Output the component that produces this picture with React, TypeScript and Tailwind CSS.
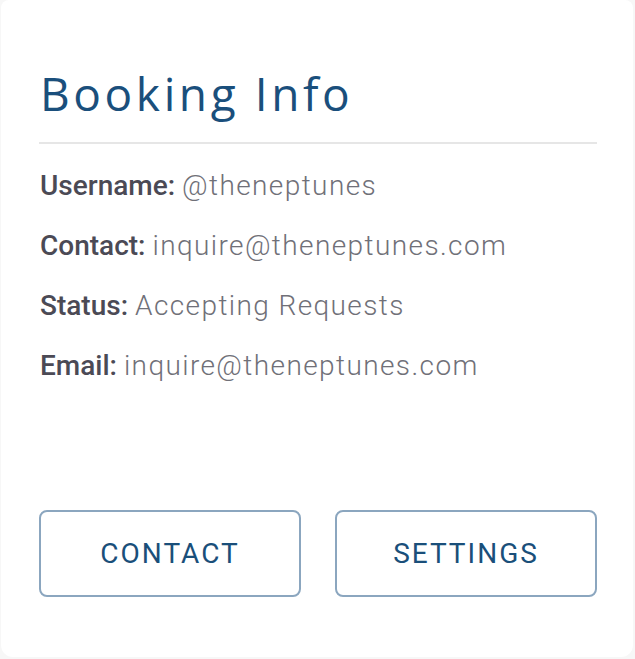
import React from 'react'

const rows = [
    { label: 'Username:', value: '@theneptunes' },
    { label: 'Contact:', value: 'inquire@theneptunes.com' },
    { label: 'Status:', value: 'Accepting Requests' },
    { label: 'Email:', value: 'inquire@theneptunes.com' },
]

const App = () => {
    return (
        <div className="min-h-[659px] w-full bg-[#f7f7f7] pl-px pr-[2px] pb-[2px]">
            <div className="flex h-[657px] flex-col rounded-b-xl rounded-t-lg bg-white pl-[38px] pr-[36px] pt-[65px]">
                <h2 className="pl-px font-['Open_Sans',sans-serif] text-[46px] leading-[56px] tracking-[3.6px] text-[#1a4f7c]">
                    Booking Info
                </h2>
                <div className="mt-[21px] h-[2px] bg-[#e6e6e6]" />
                <div className="mt-[25px] flex flex-col gap-[26px] pl-px font-['Roboto',sans-serif] text-[28px] leading-[34px]">
                    {rows.map((row) => (
                        <p key={row.label}>
                            <span className="font-medium text-[#4b4a55]">{row.label}</span>{' '}
                            <span className="font-light tracking-[1.4px] text-[#707078]">{row.value}</span>
                        </p>
                    ))}
                </div>
                <div className="mt-auto mb-[60px] grid grid-cols-2 gap-[34px]">
                    <button className="h-[87px] rounded-lg border-2 border-[#8ba6bf] font-['Roboto',sans-serif] text-[28px] tracking-[2px] text-[#1a4f7a]">
                        CONTACT
                    </button>
                    <button className="h-[87px] rounded-lg border-2 border-[#8ba6bf] font-['Roboto',sans-serif] text-[28px] tracking-[2px] text-[#1a4f7a]">
                        SETTINGS
                    </button>
                </div>
            </div>
        </div>
    )
}

export default App
